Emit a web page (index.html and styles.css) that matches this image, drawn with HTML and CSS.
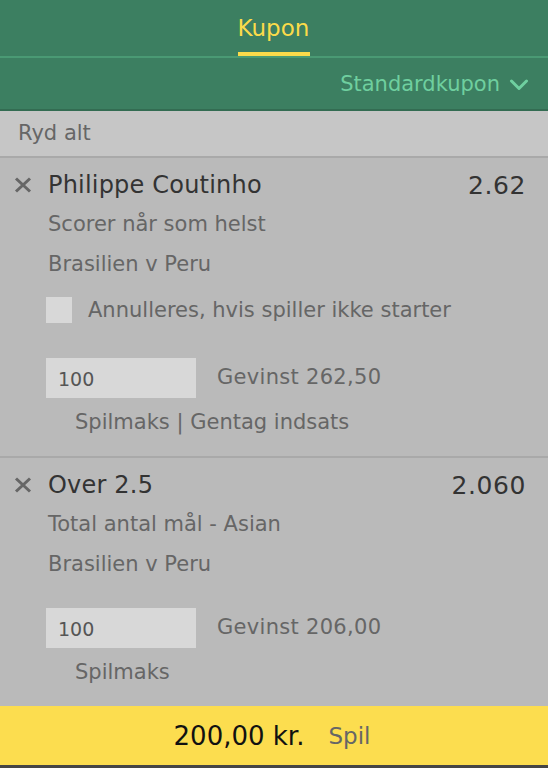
FILE: index.html
```html
<!DOCTYPE html>
<html>
<head>
<meta charset="utf-8">
<link rel="stylesheet" href="styles.css">
</head>
<body>
<div class="app">
  <header class="tabs">
    <div class="tab active">Kupon</div>
  </header>
  <div class="typebar">
    <span class="type">Standardkupon</span>
    <svg class="chev" width="20" height="12" viewBox="0 0 20 12"><path d="M2.5 2 L10 9.5 L17.5 2" fill="none" stroke="#6fd0a0" stroke-width="3" stroke-linecap="round" stroke-linejoin="round"/></svg>
  </div>
  <div class="clear">Ryd alt</div>
  <main class="slip">
    <section class="sel">
      <div class="row-title">
        <svg class="x" width="18" height="18" viewBox="0 0 18 18"><path d="M2 2.5 L16 15.5 M16 2.5 L2 15.5" stroke="#666" stroke-width="3"/></svg>
        <span class="name">Philippe Coutinho</span>
        <span class="odds">2.62</span>
      </div>
      <div class="sub">Scorer når som helst</div>
      <div class="sub">Brasilien v Peru</div>
      <label class="check"><span class="box"></span><span>Annulleres, hvis spiller ikke starter</span></label>
      <div class="stake">
        <div class="input">100</div>
        <div class="win">Gevinst 262,50</div>
      </div>
      <div class="links">Spilmaks | Gentag indsats</div>
    </section>
    <section class="sel second">
      <div class="row-title">
        <svg class="x" width="18" height="18" viewBox="0 0 18 18"><path d="M2 2.5 L16 15.5 M16 2.5 L2 15.5" stroke="#666" stroke-width="3"/></svg>
        <span class="name">Over 2.5</span>
        <span class="odds">2.060</span>
      </div>
      <div class="sub">Total antal mål - Asian</div>
      <div class="sub">Brasilien v Peru</div>
      <div class="stake stake2">
        <div class="input">100</div>
        <div class="win">Gevinst 206,00</div>
      </div>
      <div class="links">Spilmaks</div>
    </section>
  </main>
  <footer class="place">
    <span class="total">200,00 kr.</span>
    <span class="spil">Spil</span>
  </footer>
</div>
</body>
</html>
```
FILE: styles.css
```css
* { box-sizing: border-box; }
html, body { margin: 0; padding: 0; }
body {
  width: 548px;
  height: 768px;
  font-family: "DejaVu Sans", sans-serif;
  background: #bababa;
  overflow: hidden;
}
.app { display: flex; flex-direction: column; height: 768px; }
.tabs {
  height: 58px;
  background: #3c7f61;
  border-bottom: 2px solid #4a9a74;
  display: flex;
  justify-content: center;
}
.tab {
  color: #fbdb4a;
  font-size: 23px;
  line-height: 52px;
  height: 56px;
  padding-top: 2px;
  width: 72px;
  margin-left: -1px;
  text-align: center;
  border-bottom: 4px solid #fbdb4a;
}
.typebar {
  height: 53px;
  background: #3c7f61;
  border-bottom: 2px solid #336c52;
  display: flex;
  align-items: center;
  justify-content: flex-end;
  padding-right: 19px;
  gap: 9px;
}
.type { color: #6fcf9f; font-size: 21px; }
.chev { margin-top: 2px; }
.clear {
  height: 47px;
  background: #c6c6c6;
  border-bottom: 2px solid #a9a9a9;
  color: #666;
  font-size: 21px;
  line-height: 44px;
  padding-left: 18px;
}
.slip { flex: 1; background: #bababa; }
.sel { padding: 8px 22px 10px 48px; border-bottom: 2px solid #a9a9a9; }
.sel.second { border-bottom: none; padding-top: 8px; padding-bottom: 0; }
.row-title { display: flex; align-items: center; position: relative; height: 38px; }
.x { position: absolute; left: -34px; top: 10px; }
.name { color: #333; font-size: 24px; letter-spacing: 0.2px; flex: 1; }
.odds { color: #333; font-size: 25px; letter-spacing: 0.6px; }
.sub { color: #666; font-size: 21px; line-height: 40px; height: 40px; }
.check { display: flex; align-items: center; gap: 16px; height: 52px; margin-left: -2px; color: #666; font-size: 21px; }
.box { width: 26px; height: 26px; background: #d8d8d8; }
.stake { display: flex; align-items: center; margin-top: 22px; margin-left: -2px; }
.stake2 { margin-top: 24px; }
.input { width: 150px; height: 40px; background: #d8d8d8; color: #555; font-size: 19px; line-height: 40px; padding: 1px 0 0 12px; }
.win { color: #666; font-size: 21px; letter-spacing: 0.3px; margin-left: 21px; margin-top: -3px; }
.links { color: #666; font-size: 21px; line-height: 48px; height: 48px; margin-left: 27px; }
.place {
  height: 62px;
  margin-top: auto;
  background: #fcdd4f;
  border-bottom: 3px solid #454545;
  display: flex;
  justify-content: center;
  align-items: center;
  gap: 24px;
  padding-right: 4px;
}
.total { color: #111; font-size: 26px; }
.spil { color: #666; font-size: 23px; }
```
